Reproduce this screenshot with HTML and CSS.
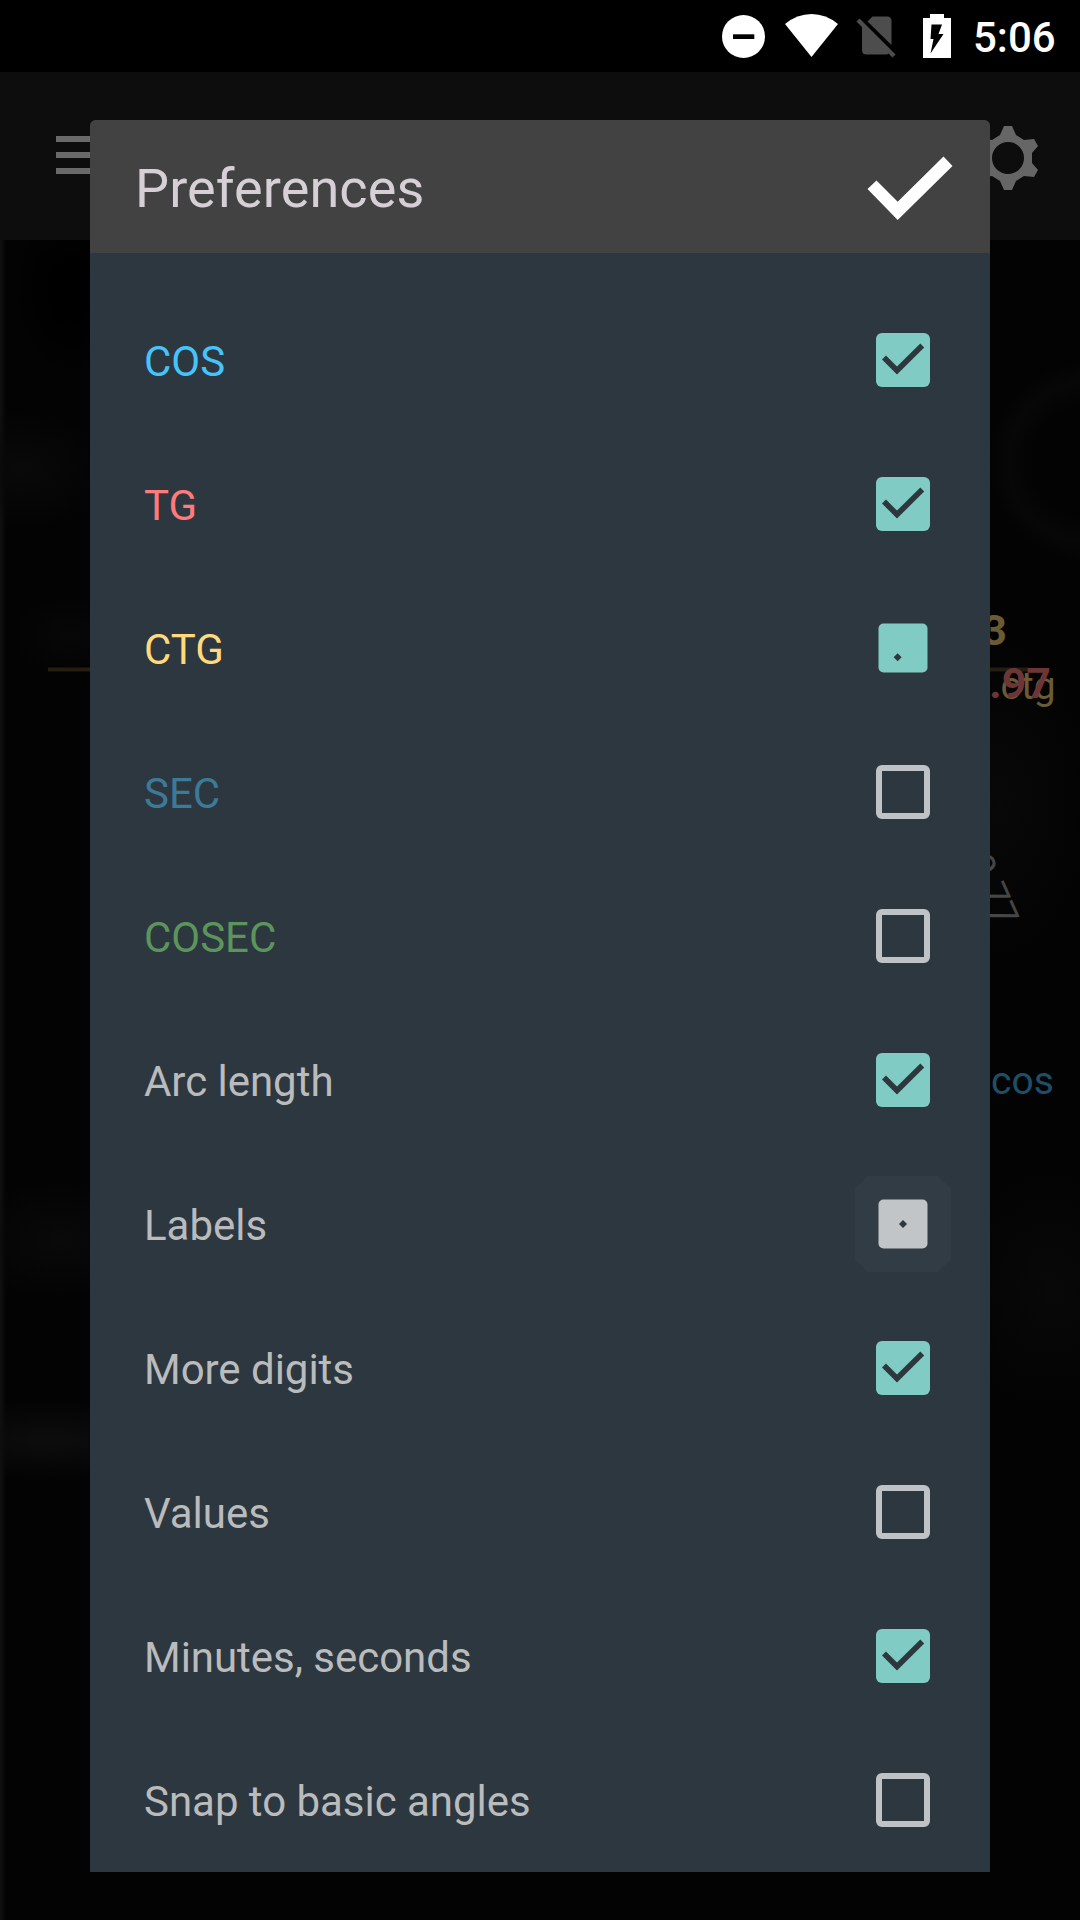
FILE: index.html
```html
<!DOCTYPE html>
<html lang="en">
<head>
<meta charset="utf-8">
<title>Preferences</title>
<link rel="stylesheet" href="styles.css">
</head>
<body>
<svg class="defs" width="0" height="0" aria-hidden="true">
  <symbol id="box-on" viewBox="0 0 54 54">
    <rect width="54" height="54" rx="6" fill="#80cbc4"/>
    <path d="M6 26.5L10 22.6L21 33.6L44.3 10.5L48.2 14.4L21 41.6Z" fill="#2d373f"/>
  </symbol>
  <symbol id="box-off" viewBox="0 0 54 54">
    <path fill-rule="evenodd" d="M6 0H48A6 6 0 0 1 54 6V48A6 6 0 0 1 48 54H6A6 6 0 0 1 0 48V6A6 6 0 0 1 6 0ZM6 6V48H48V6Z" fill="#c0c3c5"/>
  </symbol>
  <symbol id="box-filling" viewBox="0 0 54 54">
    <rect x="2.5" y="2.5" width="49" height="49" rx="5" fill="#80cbc4"/>
    <path d="M21.6 32.3L25.6 36.3L21.6 40.3L17.6 36.3Z" fill="#2d373f"/>
  </symbol>
  <symbol id="box-clearing" viewBox="0 0 54 54">
    <rect x="2.5" y="2.5" width="49" height="49" rx="5" fill="#c1c5c8"/>
    <path d="M27 23L31 27L27 31L23 27Z" fill="#2d373f"/>
  </symbol>
</svg>
<div class="screen">
  <header class="status">
    <svg class="status-icons" width="256" height="72" viewBox="700 0 256 72">
      <circle cx="743.5" cy="36.5" r="21.5" fill="#fff"/>
      <path d="M733 34.3H754.3V39H733Z" fill="#000"/>
      <path d="M785 24Q797 14 811.5 14T838 24L811.5 57Z" fill="#fff"/>
      <path d="M867.5 21.5L872.5 16.5H887Q891.5 16.5 891.5 21V45Z" fill="#4d4d4d"/>
      <path d="M862 25L889 53Q888 54.5 886 54.5H866.5Q862 54.5 862 50Z" fill="#4d4d4d"/>
      <path d="M858 20L894 56" stroke="#4d4d4d" stroke-width="4.500"/>
      <path d="M930 14H944V18H951V58H923V18H930Z" fill="#fff"/>
      <path d="M931.5 24.5H942L938.5 34H943.5L930.5 53.5L933.5 39H930.5Z" fill="#000"/>
    </svg>
    <span class="clock">5:06</span>
  </header>
  <div class="appbar">
    <svg class="menu" width="54" height="38" viewBox="0 0 54 38"><path d="M0 0H54V6H0ZM0 16H54V22H0ZM0 32H54V38H0Z" fill="#6a6a6a"/></svg>
    <svg class="gear" width="64" height="66" viewBox="-32 -33 64 66"><path fill-rule="evenodd" fill="#666" d="M-4-32H4L8-23L16-18L26-19L30-12L24-5V5L30 12L26 19L16 18L8 23L4 32H-4L-8 23L-16 18L-26 19L-30 12L-24 5V-5L-30-12L-26-19L-16-18L-8-23ZM16 0A16 16 0 1 0-16 0A16 16 0 1 0 16 0Z"/></svg>
  </div>
  <main class="board">
    <svg width="1080" height="1680" viewBox="0 240 1080 1680">
      <path d="M48 669.5H1028" stroke="#231d12" stroke-width="4"/>
      <g class="graph">
        <text class="value" x="1007" y="644.5" text-anchor="end" fill="#6b5b34">3</text>
        <text class="axis" x="1000.5" y="699" fill="#6b5b34">ctg</text>
        <text class="value" x="1051" y="698" text-anchor="end" fill="#6c3636">.97</text>
        <text class="arc" transform="translate(995.5 929) rotate(66)" text-anchor="end" fill="#464646">0.77</text>
        <text class="axis" x="991" y="1094" fill="#1d4f69">cos</text>
      </g>
    </svg>
  </main>

  <section class="dialog">
    <div class="dialog-head">
      <h1>Preferences</h1>
      <svg width="86" height="64" viewBox="868 156 86 64"><path d="M868.5 189L877.5 180.5L898.7 201.7L944.5 156.5L953.5 166L898.7 220Z" fill="#fff"/></svg>
    </div>
    <ul class="options">
      <li class="cos"><span>COS</span><svg class="box"><use href="#box-on"/></svg></li>
      <li class="tg"><span>TG</span><svg class="box"><use href="#box-on"/></svg></li>
      <li class="ctg"><span>CTG</span><svg class="box"><use href="#box-filling"/></svg></li>
      <li class="sec"><span>SEC</span><svg class="box"><use href="#box-off"/></svg></li>
      <li class="cosec"><span>COSEC</span><svg class="box"><use href="#box-off"/></svg></li>
      <li><span>Arc length</span><svg class="box"><use href="#box-on"/></svg></li>
      <li><span>Labels</span><div class="ripple"><svg class="box"><use href="#box-clearing"/></svg></div></li>
      <li><span>More digits</span><svg class="box"><use href="#box-on"/></svg></li>
      <li><span>Values</span><svg class="box"><use href="#box-off"/></svg></li>
      <li><span>Minutes, seconds</span><svg class="box"><use href="#box-on"/></svg></li>
      <li><span>Snap to basic angles</span><svg class="box"><use href="#box-off"/></svg></li>
    </ul>
  </section>
</div>
</body>
</html>
```
FILE: styles.css
```css
* { box-sizing: border-box; }
body {
  margin: 0;
  background: #020202;
  font-family: Roboto, "Noto Sans", sans-serif;
}
svg { display: block; flex: none; }
.defs { position: absolute; }
.screen {
  position: relative;
  display: flex;
  flex-direction: column;
  width: 1080px;
  height: 1920px;
  overflow: hidden;
}
.status {
  display: flex;
  align-items: center;
  justify-content: flex-end;
  height: 72px;
  padding-right: 24px;
  background: #000;
}
.clock {
  width: 83px;
  margin-left: 17px;
  color: #fff;
  font-size: 42px;
  font-weight: 500;
  line-height: 72px;
  padding-top: 3px;
  white-space: nowrap;
}
.appbar {
  display: flex;
  align-items: flex-start;
  justify-content: space-between;
  height: 168px;
  padding: 0 40px 0 56px;
  background: #0d0d0d;
}
.menu { margin-top: 64px; }
.gear { margin-top: 53px; }
.board {
  flex: 1;
  background:
    radial-gradient(ellipse 60px 90px at 70px 50px, #000 30%, transparent),
    radial-gradient(ellipse 90px 60px at 20px 230px, #090909, transparent),
    radial-gradient(ellipse 60px 40px at 70px 395px, #070707, transparent),
    radial-gradient(ellipse 100px 60px at 60px 1000px, #090909, transparent),
    radial-gradient(ellipse 140px 40px at 50px 1200px, #0d0d0d, transparent),
    radial-gradient(circle 100px at 1088px 222px, transparent 55%, #070707 80%, transparent),
    radial-gradient(ellipse 90px 160px at 1000px 560px, #080808, transparent),
    radial-gradient(ellipse 100px 120px at 1050px 1050px, #080808, transparent),
    linear-gradient(90deg, #111 0, #030303 6px, #030303);
}
.value { font-size: 43px; font-weight: 700; }
.axis { font-size: 39px; }
.arc { font-size: 38px; font-weight: 400; }
.dialog {
  position: absolute;
  top: 120px;
  left: 90px;
  width: 900px;
  height: 1752px;
  border-radius: 6px 6px 0 0;
  background: #2d373f;
  overflow: hidden;
}
.dialog-head {
  display: flex;
  align-items: center;
  justify-content: space-between;
  height: 133px;
  padding: 3px 37px 0 45px;
  background: #424242;
}
h1 {
  margin: 0;
  padding-top: 1px;
  color: #d6d0d6;
  font-size: 54px;
  font-weight: 400;
  letter-spacing: 0.1px;
}
.options {
  margin: 0;
  padding: 35px 60px 0 54px;
  list-style: none;
}
.options li {
  display: flex;
  align-items: center;
  justify-content: space-between;
  height: 144px;
  color: #b9bbbd;
  font-size: 42px;
}
.options span { padding-top: 2px; letter-spacing: -0.03px; }
.box { width: 54px; height: 54px; }
.ripple {
  margin-right: -21px;
  padding: 21px;
  background: #323c44;
  clip-path: polygon(13px 0, 83px 0, 96px 13px, 96px 83px, 83px 96px, 13px 96px, 0 83px, 0 13px);
}
.options .cos { color: #46c3fb; }
.options .tg { color: #ff7b7b; }
.options .ctg { color: #ffd97c; }
.options .sec { color: #3c7a98; }
.options .cosec { color: #5c955c; }
```
